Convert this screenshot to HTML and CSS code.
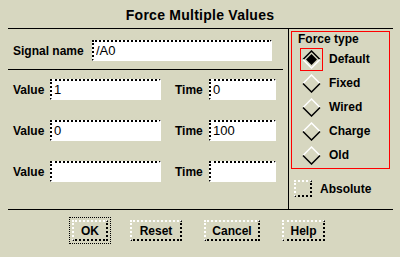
FILE: index.html
```html
<!DOCTYPE html>
<html lang="en">
<head>
    <meta charset="UTF-8">
    <title>Force Multiple Values</title>
    <link rel="stylesheet" href="styles.css">
</head>
<body>
    <div class="dialog">
        <h1 class="title">Force Multiple Values</h1>
        <div class="rule"></div>

        <div class="main">
            <div class="fields">
                <div class="signal-row">
                    <label class="label signal-label">Signal name</label>
                    <input class="entry signal-entry" type="text" value="/A0">
                </div>
                <div class="rule short"></div>

                <div class="value-row">
                    <label class="label value-label">Value</label>
                    <input class="entry value-entry" type="text" value="1">
                    <label class="label time-label">Time</label>
                    <input class="entry time-entry" type="text" value="0">
                </div>
                <div class="value-row">
                    <label class="label value-label">Value</label>
                    <input class="entry value-entry" type="text" value="0">
                    <label class="label time-label">Time</label>
                    <input class="entry time-entry" type="text" value="100">
                </div>
                <div class="value-row">
                    <label class="label value-label">Value</label>
                    <input class="entry value-entry" type="text" value="">
                    <label class="label time-label">Time</label>
                    <input class="entry time-entry" type="text" value="">
                </div>
            </div>

            <div class="vrule"></div>

            <div class="options">
                <div class="force-group">
                    <div class="group-title">Force type</div>
                    <div class="radio-row">
                        <span class="radio-mark current">
                            <svg width="19" height="19" viewBox="0 0 19 19">
                                <polyline points="1,9.5 9.5,1 18,9.5" fill="none" stroke="#000" stroke-width="1.5"/>
                                <polyline points="1,9.5 9.5,18 18,9.5" fill="none" stroke="#fff" stroke-width="1.5"/>
                                <polygon points="4,9.5 9.5,4 15,9.5 9.5,15" fill="#000"/>
                            </svg>
                        </span>
                        <span>Default</span>
                    </div>
                    <div class="radio-row">
                        <span class="radio-mark">
                            <svg width="19" height="19" viewBox="0 0 19 19">
                                <polyline points="1,9.5 9.5,1 18,9.5" fill="none" stroke="#fff" stroke-width="1.5"/>
                                <polyline points="1,9.5 9.5,18 18,9.5" fill="none" stroke="#000" stroke-width="1.5"/>
                            </svg>
                        </span>
                        <span>Fixed</span>
                    </div>
                    <div class="radio-row">
                        <span class="radio-mark">
                            <svg width="19" height="19" viewBox="0 0 19 19">
                                <polyline points="1,9.5 9.5,1 18,9.5" fill="none" stroke="#fff" stroke-width="1.5"/>
                                <polyline points="1,9.5 9.5,18 18,9.5" fill="none" stroke="#000" stroke-width="1.5"/>
                            </svg>
                        </span>
                        <span>Wired</span>
                    </div>
                    <div class="radio-row">
                        <span class="radio-mark">
                            <svg width="19" height="19" viewBox="0 0 19 19">
                                <polyline points="1,9.5 9.5,1 18,9.5" fill="none" stroke="#fff" stroke-width="1.5"/>
                                <polyline points="1,9.5 9.5,18 18,9.5" fill="none" stroke="#000" stroke-width="1.5"/>
                            </svg>
                        </span>
                        <span>Charge</span>
                    </div>
                    <div class="radio-row">
                        <span class="radio-mark">
                            <svg width="19" height="19" viewBox="0 0 19 19">
                                <polyline points="1,9.5 9.5,1 18,9.5" fill="none" stroke="#fff" stroke-width="1.5"/>
                                <polyline points="1,9.5 9.5,18 18,9.5" fill="none" stroke="#000" stroke-width="1.5"/>
                            </svg>
                        </span>
                        <span>Old</span>
                    </div>
                </div>

                <div class="check-row">
                    <span class="check-box"></span>
                    <span>Absolute</span>
                </div>
            </div>
        </div>

        <div class="rule"></div>

        <div class="buttons">
            <button class="btn btn-ok">OK</button>
            <button class="btn btn-reset">Reset</button>
            <button class="btn btn-cancel">Cancel</button>
            <button class="btn btn-help">Help</button>
        </div>
    </div>
</body>
</html>
```

FILE: styles.css
```css
body {
    margin: 0;
    background-color: #d7d7c0;
    font-family: "Liberation Sans", Arial, sans-serif;
    color: #000;
}
.dialog {
    width: 400px;
    height: 257px;
}
.title {
    margin: 0;
    height: 28px;
    padding-top: 6px;
    box-sizing: border-box;
    line-height: 18px;
    font-size: 14px;
    font-weight: bold;
    letter-spacing: 0.25px;
    text-align: center;
}
.rule {
    height: 1px;
    margin: 0 7px 0 8px;
    background: #000;
}
.rule.short {
    width: 275px;
    margin: 8px 0 0 -5px;
}
.main {
    display: flex;
    height: 180px;
}
.fields {
    width: 275px;
    margin-left: 8px;
    padding-left: 5px;
}
.label {
    font-size: 12px;
    font-weight: bold;
}
.entry {
    height: 21px;
    box-sizing: border-box;
    margin: 0;
    padding: 0 2px;
    border: 2px dotted;
    border-color: #000 #fff #fff #000;
    background: #fff;
    font-family: "Liberation Sans", Arial, sans-serif;
    font-size: 13px;
    color: #000;
    outline: none;
}
.signal-row {
    display: flex;
    align-items: center;
    margin-top: 11px;
}
.signal-label {
    width: 79px;
}
.signal-entry {
    width: 180px;
}
.value-row {
    display: flex;
    align-items: center;
    margin-top: 20px;
}
.rule.short + .value-row {
    margin-top: 9px;
}
.value-label {
    width: 37px;
}
.value-entry {
    width: 111px;
}
.time-label {
    width: 34px;
    margin-left: 14px;
}
.time-entry {
    width: 67px;
}
.vrule {
    width: 1px;
    background: #000;
}
.options {
    padding-left: 2px;
    padding-top: 2px;
}
.force-group {
    width: 99px;
    box-sizing: border-box;
    border: 1px solid #ff0000;
    padding-bottom: 1px;
}
.group-title {
    padding-left: 6px;
    line-height: 15px;
    font-size: 12px;
    font-weight: bold;
}
.radio-row {
    display: flex;
    align-items: center;
    height: 24px;
    padding-left: 8px;
    font-size: 12px;
    font-weight: bold;
}
.radio-mark {
    display: flex;
    align-items: center;
    justify-content: center;
    width: 23px;
    height: 23px;
    box-sizing: border-box;
    border: 1px solid transparent;
    margin-right: 6px;
}
.radio-mark.current {
    border-color: #ff0000;
}
.check-row {
    display: flex;
    align-items: center;
    margin-top: 11px;
    padding-left: 3px;
    font-size: 12px;
    font-weight: bold;
}
.check-box {
    width: 18px;
    height: 17px;
    box-sizing: border-box;
    border: 2px dotted;
    border-color: #fff #000 #000 #fff;
    margin-right: 8px;
}
.buttons {
    display: flex;
    gap: 22px;
    padding: 10px 0 0 72px;
}
.btn {
    height: 21px;
    box-sizing: border-box;
    padding: 0;
    border: 2px dotted;
    border-color: #fff #000 #000 #fff;
    background: transparent;
    font-family: "Liberation Sans", Arial, sans-serif;
    font-size: 12px;
    font-weight: bold;
    color: #000;
}
.btn-ok {
    width: 36px;
    outline: 1px dotted #000;
    outline-offset: 2px;
}
.btn-reset {
    width: 52px;
}
.btn-cancel {
    width: 56px;
}
.btn-help {
    width: 43px;
}
```
